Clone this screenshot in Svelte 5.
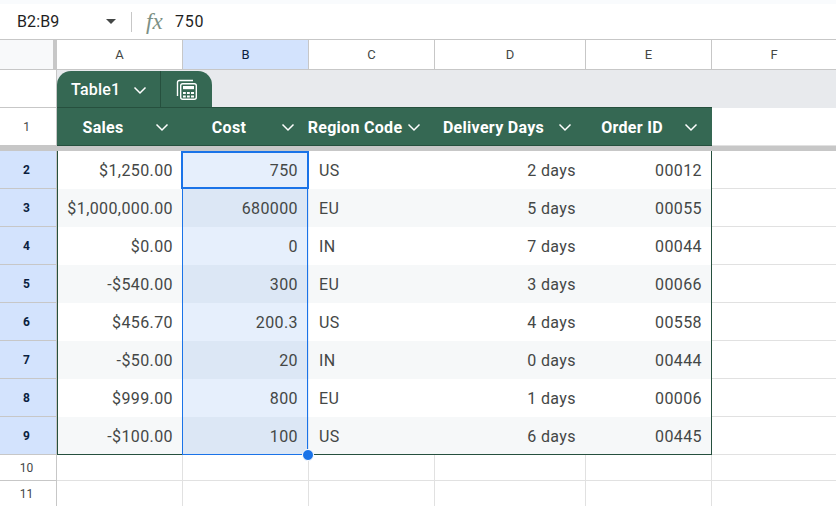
<script>
  const columns = ['A', 'B', 'C', 'D', 'E', 'F']
  const headers = ['Sales', 'Cost', 'Region Code', 'Delivery Days', 'Order ID']

  const rows = [
    { n: 2, sales: '$1,250.00', cost: '750', region: 'US', days: '2 days', id: '00012' },
    { n: 3, sales: '$1,000,000.00', cost: '680000', region: 'EU', days: '5 days', id: '00055' },
    { n: 4, sales: '$0.00', cost: '0', region: 'IN', days: '7 days', id: '00044' },
    { n: 5, sales: '-$540.00', cost: '300', region: 'EU', days: '3 days', id: '00066' },
    { n: 6, sales: '$456.70', cost: '200.3', region: 'US', days: '4 days', id: '00558' },
    { n: 7, sales: '-$50.00', cost: '20', region: 'IN', days: '0 days', id: '00444' },
    { n: 8, sales: '$999.00', cost: '800', region: 'EU', days: '1 days', id: '00006' },
    { n: 9, sales: '-$100.00', cost: '100', region: 'US', days: '6 days', id: '00445' }
  ]
</script>

{#snippet chevron()}
  <svg class="chevron" width="14" height="14" viewBox="0 0 14 14">
    <path d="M1.500 4.500 7 10l5.500-5.500" fill="none" stroke="#fff" stroke-width="1.500" />
  </svg>
{/snippet}

<div class="sheet">
  <div class="formula">
    <span class="range">B2:B9</span>
    <span class="caret"></span>
    <span class="divider"></span>
    <span class="fx">fx</span>
    <span class="value">750</span>
  </div>

  <div class="row colhead">
    <div class="corner"></div>
    {#each columns as c}
      <div class="letter" class:on={c === 'B'}>{c}</div>
    {/each}
  </div>

  <div class="row tabrow">
    <div class="rowhead"></div>
    <div class="tabstrip">
      <div class="tab">
        <div class="tabname">Table1 {@render chevron()}</div>
        <div class="tabicon">
          <svg width="22" height="22" viewBox="0 0 22 22" fill="none" stroke="#fff">
            <path d="M1.500 17V3.500q0-2 2-2H17" stroke-width="1.400" />
            <rect x="4.700" y="4.700" width="15.600" height="15.600" rx="2" stroke-width="1.400" />
            <rect x="7" y="7" width="11" height="3.200" fill="#fff" stroke="none" />
            <path d="M7 13h2.800v2H7zM11 13h2.800v2H11zM15 13h3v2h-3zM7 16.500h2.800v2H7zM11 16.500h2.800v2H11zM15 16.500h3v2h-3z" fill="#fff" stroke="none" />
          </svg>
        </div>
      </div>
    </div>
  </div>

  <div class="row titles">
    <div class="rowhead num">1</div>
    {#each headers as h}
      <div class="title"><span>{h}</span>{@render chevron()}</div>
    {/each}
    <div class="blank"></div>
  </div>

  <div class="freeze"></div>

  <div class="body">
    {#each rows as r, i}
      <div class="row data" class:band={i % 2 === 1} class:end={i === rows.length - 1}>
        <div class="rowhead num on">{r.n}</div>
        <div class="cell right first">{r.sales}</div>
        <div class="cell right picked">{r.cost}</div>
        <div class="cell">{r.region}</div>
        <div class="cell right">{r.days}</div>
        <div class="cell right last">{r.id}</div>
        <div class="blank"></div>
      </div>
    {/each}
    <div class="selection"><span class="handle"></span></div>
    <div class="active"></div>
  </div>

  {#each [10, 11] as n}
    <div class="row empty">
      <div class="rowhead num">{n}</div>
      {#each columns as c}
        <div class="blank"></div>
      {/each}
    </div>
  {/each}
</div>

<style>
  :global(body) {
    background: #fff;
    overflow: hidden;
  }
  .sheet {
    width: 836px;
    height: 506px;
    overflow: hidden;
    font-family: Roboto, "Liberation Sans", sans-serif;
    font-size: 16px;
    color: #444746;
  }
  .formula {
    height: 35px;
    margin-top: 4px;
    box-shadow: 0 -4px 0 #f9fbfd;
    display: flex;
    align-items: center;
    color: #1f1f1f;
    border-bottom: 1px solid #c7c7c7;
  }
  .range {
    margin-left: 17px;
    width: 89px;
    letter-spacing: 0.1px;
  }
  .caret {
    width: 0;
    height: 0;
    border-left: 5px solid transparent;
    border-right: 5px solid transparent;
    border-top: 5px solid #444746;
  }
  .divider {
    width: 1px;
    height: 20px;
    margin-left: 15px;
    background: #c7c7c7;
  }
  .fx {
    margin-left: 14px;
    width: 29px;
    font-family: "Liberation Serif", serif;
    font-style: italic;
    font-size: 23px;
    color: #7c9085;
  }
  .value {
    letter-spacing: 0.8px;
  }
  .row {
    display: grid;
    grid-template-columns: 57px 126px 126px 126px 151px 126px 125px;
  }
  .colhead {
    height: 30px;
    box-sizing: border-box;
    border-bottom: 1px solid #c7c7c7;
  }
  .corner {
    background: #f8f9fa;
    border-right: 4px solid #c7c7c7;
  }
  .letter {
    display: flex;
    align-items: center;
    justify-content: center;
    font-size: 13px;
    border-right: 1px solid #c7c7c7;
  }
  .letter.on {
    background: #d3e3fd;
    color: #0b1f3f;
  }
  .rowhead {
    border-right: 1px solid #c7c7c7;
    border-bottom: 1px solid #c7c7c7;
    box-sizing: border-box;
  }
  .num {
    display: flex;
    align-items: center;
    justify-content: center;
    font-size: 12px;
    padding-right: 3px;
  }
  .num.on {
    background: #d3e3fd;
    color: #0b1f3f;
    font-weight: 700;
  }
  .tabrow {
    height: 38px;
  }
  .tabstrip {
    grid-column: 2 / 8;
    background: #e8eaed;
    height: 38px;
  }
  .tab {
    width: 155px;
    height: 37px;
    margin-top: 1px;
    background: #356853;
    border-radius: 14px 14px 0 0;
    display: flex;
    color: #fff;
    font-weight: 500;
    overflow: hidden;
    letter-spacing: 0.2px;
  }
  .tabname {
    width: 104px;
    flex: none;
    display: flex;
    align-items: center;
    gap: 13px;
    padding-left: 14px;
    box-sizing: border-box;
    border-right: 1px solid #26503e;
  }
  .tabicon {
    flex: 1;
    display: flex;
    align-items: center;
    justify-content: center;
  }
  .titles {
    height: 38px;
  }
  .title {
    display: flex;
    align-items: center;
    justify-content: center;
    background: #356853;
    color: #fff;
    font-weight: 700;
    letter-spacing: 0.3px;
    white-space: nowrap;
    box-shadow: 0 -1px 0 #26503e;
    border-bottom: 1px solid #26503e;
    box-sizing: border-box;
    padding-top: 2px;
    position: relative;
  }
  .title span {
    margin-right: 34px;
  }
  .title .chevron {
    position: absolute;
    right: 14px;
    top: 12px;
  }
  .freeze {
    height: 5px;
    background: #c7c7c7;
  }
  .body {
    position: relative;
  }
  .data {
    height: 38px;
  }
  .data.band .cell {
    background: #f6f8f9;
  }
  .cell {
    display: flex;
    align-items: center;
    padding: 0 10px;
    box-sizing: border-box;
    white-space: nowrap;
    letter-spacing: 0.4px;
  }
  .cell.right {
    justify-content: flex-end;
  }
  .cell.first {
    border-left: 1px solid #26503e;
  }
  .cell.picked {
    padding-right: 11px;
    background: #e6effc;
  }
  .cell.last {
    border-right: 1px solid #26503e;
    padding-right: 9px;
  }
  .data.band .cell.picked {
    background: #dce7f5;
  }
  .data.end .cell {
    box-shadow: inset 0 -1px 0 #26503e;
  }
  .blank {
    border-right: 1px solid #e1e1e1;
    border-bottom: 1px solid #e1e1e1;
    box-sizing: border-box;
  }
  .empty {
    height: 26px;
  }
  .selection {
    position: absolute;
    left: 182px;
    top: 0;
    width: 126px;
    height: 304px;
    box-sizing: border-box;
    border: 1px solid #1a73e8;
    pointer-events: none;
  }
  .active {
    position: absolute;
    left: 181px;
    top: 0;
    width: 128px;
    height: 38px;
    box-sizing: border-box;
    border: 2px solid #1a73e8;
  }
  .handle {
    position: absolute;
    right: -7px;
    bottom: -7px;
    width: 10px;
    height: 10px;
    border-radius: 50%;
    background: #1a73e8;
    border: 1px solid #fff;
  }
</style>
